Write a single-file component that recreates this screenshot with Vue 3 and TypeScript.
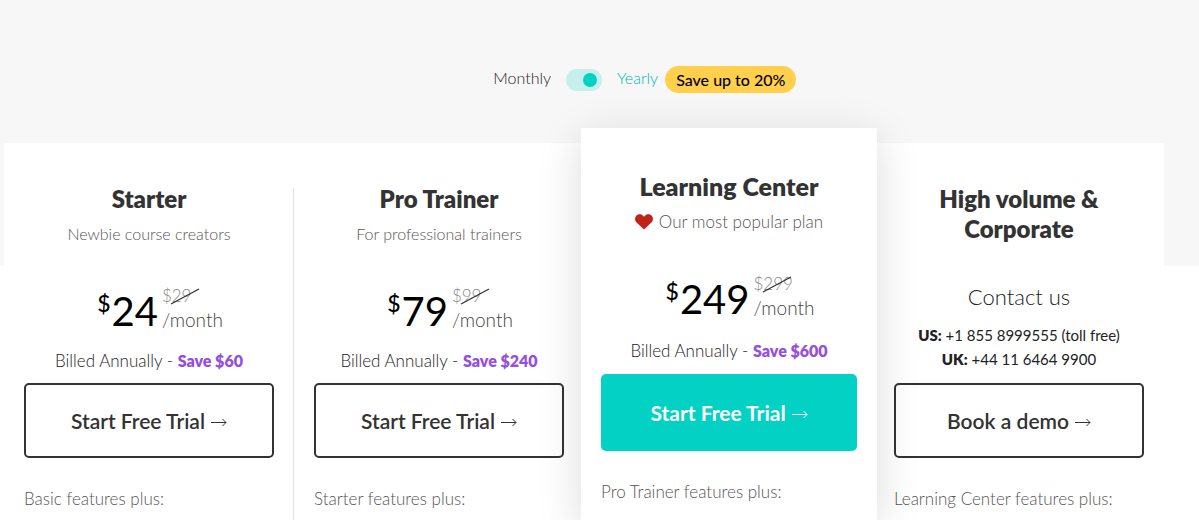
<script setup lang="ts">
import { ref } from 'vue'

interface Plan {
  name: string
  tagline?: string
  price?: number
  oldPrice?: number
  saving?: number
  action: string
  features: string
  featured?: boolean
}

const yearly = ref(true)

const plans: Plan[] = [
  { name: 'Starter', tagline: 'Newbie course creators', price: 24, oldPrice: 29, saving: 60, action: 'Start Free Trial', features: 'Basic features plus:' },
  { name: 'Pro Trainer', tagline: 'For professional trainers', price: 79, oldPrice: 99, saving: 240, action: 'Start Free Trial', features: 'Starter features plus:' },
  { name: 'Learning Center', tagline: 'Our most popular plan', price: 249, oldPrice: 299, saving: 600, action: 'Start Free Trial', features: 'Pro Trainer features plus:', featured: true },
  { name: 'High volume & Corporate', action: 'Book a demo', features: 'Learning Center features plus:' },
]
</script>

<template>
  <main class="pricing">
    <div class="billing">
      <label class="monthly" for="period">Monthly</label>
      <input id="period" v-model="yearly" class="switch" type="checkbox" role="switch" />
      <div class="yearly">
        <label for="period">Yearly</label>
        <span class="pill">Save up to 20%</span>
      </div>
    </div>

    <div class="plans">
      <section v-for="plan in plans" :key="plan.name" class="plan" :class="{ featured: plan.featured }">
        <header class="head">
          <h2>{{ plan.name }}</h2>
          <p v-if="plan.tagline" class="tagline">
            <svg v-if="plan.featured" class="heart" viewBox="0 0 18 16" aria-hidden="true">
              <path d="M9 15.500 1.300 8.300C-.3 6.500-.4 3.500 1.300 1.700C3.200-.2 6.200-.1 8 1.700L9 2.800L10 1.700C11.800-.1 14.800-.2 16.700 1.700C18.400 3.500 18.300 6.500 16.700 8.300Z" fill="#bf2419" />
            </svg>
            {{ plan.tagline }}
          </p>
        </header>

        <div v-if="plan.price" class="offer">
          <div class="price">
            <span class="currency">$</span>
            <span class="amount">{{ plan.price }}</span>
            <div class="aside">
              <del class="old">${{ plan.oldPrice }}
                <svg class="slash" viewBox="0 0 30 17" aria-hidden="true"><path d="M1 16 29 1" stroke="#333" stroke-width="1.300" /></svg>
              </del>
              <span class="period">/month</span>
            </div>
          </div>
          <p class="billed">Billed Annually - <strong>Save ${{ plan.saving }}</strong></p>
        </div>
        <div v-else class="offer contact">
          <h3>Contact us</h3>
          <p><b>US:</b> +1 855 8999555 (toll free)</p>
          <p><b>UK:</b> +44 11 6464 9900</p>
        </div>

        <button type="button" class="action">
          {{ plan.action }}
          <svg class="arrow" viewBox="0 0 16 9" aria-hidden="true"><path d="M0 4.500H15M11.500 1 15 4.500 11.500 8" fill="none" stroke="currentColor" stroke-width="1" /></svg>
        </button>
        <p class="features">{{ plan.features }}</p>
      </section>
    </div>
  </main>
</template>

<style>
body {
  margin: 0;
  background: #fff;
}
</style>

<style scoped>
.pricing {
  display: flex;
  flex-direction: column;
  box-sizing: border-box;
  min-height: 100vh;
  padding: 66px 35px 0 4px;
  overflow: hidden;
  background: linear-gradient(#f7f7f7 266px, #fff 266px);
  color: #222;
  font-family: Lato, "Liberation Sans", sans-serif;
  font-size: 16px;
  font-weight: 300;
  line-height: 24px;
}

h2,
h3,
p {
  margin: 0;
}

.billing {
  display: grid;
  grid-template-columns: 1fr 36px 1fr;
  align-items: center;
  column-gap: 15px;
  margin-bottom: 50px;
}

.billing label {
  padding-bottom: 3px;
}

.monthly {
  justify-self: end;
}

.switch {
  display: flex;
  align-items: center;
  box-sizing: border-box;
  width: 36px;
  height: 22px;
  margin: 0;
  padding: 0 5px;
  appearance: none;
  border-radius: 11px;
  background: #c5f0ed;
  cursor: pointer;
}

.switch::before {
  content: "";
  width: 14px;
  height: 14px;
  border-radius: 50%;
  background: #03d1c3;
}

.switch:checked {
  justify-content: flex-end;
}

.yearly {
  display: flex;
  align-items: center;
  gap: 7px;
  color: #00b8aa;
}

.pill {
  padding: 0 11px;
  border-radius: 14px;
  background: #ffd04d;
  color: #000;
  font-size: 16px;
  font-weight: 500;
  line-height: 27px;
}

.plans {
  display: grid;
  flex: 1;
  grid-template-columns: repeat(4, 1fr);
  background: #fff;
}

.plan {
  position: relative;
  padding: 41px 20px 0;
}

.plan:first-child::after {
  content: "";
  position: absolute;
  top: 45px;
  right: 0;
  bottom: 0;
  width: 1px;
  background: #e2e2e2;
}

.featured {
  z-index: 1;
  margin: -15px -3px 0;
  padding: 43px 20px 0;
  background: #fff;
  box-shadow: 0 10px 42px rgba(0, 0, 0, 0.14);
}

.head {
  min-height: 100px;
  text-align: center;
}

.featured .head {
  min-height: 101px;
}

h2 {
  color: #333;
  font-size: 24px;
  font-weight: 800;
  line-height: 30px;
}

.featured h2 {
  font-size: 25px;
}

.tagline {
  display: flex;
  justify-content: center;
  align-items: center;
  gap: 6px;
  margin-top: 8px;
  color: #555;
}

.featured .tagline {
  margin-top: 9px;
  font-size: 17px;
}

.heart {
  width: 18px;
  height: 16px;
}

.offer {
  min-height: 99px;
  text-align: center;
}

.featured .offer {
  min-height: 102px;
}

.price {
  display: flex;
  justify-content: center;
  height: 50px;
  margin-bottom: 15px;
  padding-left: 22px;
  color: #000;
}

.featured .price {
  margin-bottom: 17px;
}

.currency {
  margin-right: 1px;
  font-size: 23px;
  font-weight: 500;
  line-height: 38px;
}

.amount {
  font-size: 40px;
  font-weight: 400;
  line-height: 54px;
}

.aside {
  display: flex;
  flex-direction: column;
  align-items: flex-start;
  margin-left: 4px;
}

.old {
  position: relative;
  color: #888;
  font-size: 17px;
  text-decoration: none;
}

.slash {
  position: absolute;
  top: 4px;
  left: 8px;
  width: 30px;
  height: 17px;
}

.period {
  color: #444;
  font-size: 19px;
}

.billed,
.features {
  font-size: 17px;
}

.billed strong {
  color: #954ee0;
  font-size: 16px;
  font-weight: 800;
}

h3 {
  margin-bottom: 13px;
  font-size: 22px;
  font-weight: 300;
  line-height: 26px;
}

.contact {
  font-size: 15px;
  font-weight: 400;
}

.contact b {
  font-weight: 800;
}

.action {
  display: flex;
  justify-content: center;
  align-items: center;
  gap: 6px;
  width: 100%;
  height: 75px;
  padding: 0;
  border: 2px solid #333;
  border-radius: 5px;
  background: transparent;
  color: #333;
  font: 600 21px/30px Lato, "Liberation Sans", sans-serif;
  cursor: pointer;
}

.arrow {
  width: 16px;
  height: 9px;
  margin-top: 4px;
}

.featured .action {
  height: 77px;
  border-color: #03d1c3;
  background: #03d1c3;
  color: #fff;
  font-weight: 700;
}

.features {
  margin-top: 29px;
  color: #555;
}
</style>
